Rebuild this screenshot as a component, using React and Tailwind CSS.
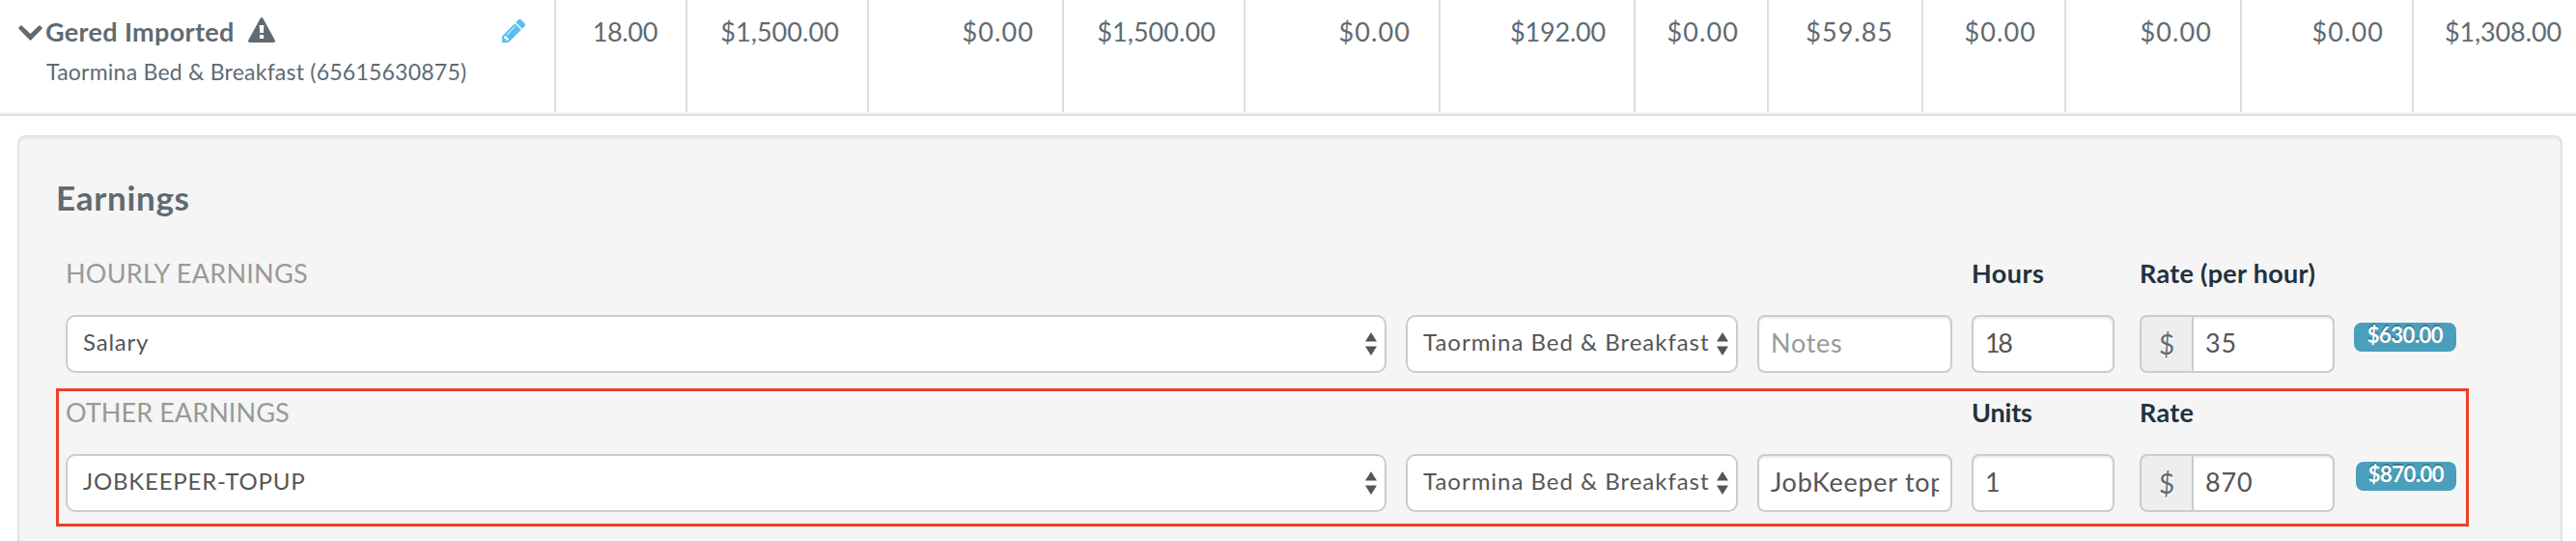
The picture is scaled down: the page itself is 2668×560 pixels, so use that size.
import { useState } from 'react';

const totals = [
  { value: '18.00', cell: 'w-[136px] tracking-[-0.34px]' },
  { value: '$1,500.00', cell: 'w-[188px] tracking-[0.07px]' },
  { value: '$0.00', cell: 'w-[202px] tracking-[1.1px]' },
  { value: '$1,500.00', cell: 'w-[188px] tracking-[0.07px]' },
  { value: '$0.00', cell: 'w-[202px] tracking-[1.1px]' },
  { value: '$192.00', cell: 'w-[202px] tracking-[-0.2px]' },
  { value: '$0.00', cell: 'w-[138px] tracking-[1.1px]' },
  { value: '$59.85', cell: 'w-[160px] tracking-[1px]' },
  { value: '$0.00', cell: 'w-[148px] tracking-[1.1px]' },
  { value: '$0.00', cell: 'w-[182px] tracking-[1.1px]' },
  { value: '$0.00', cell: 'w-[178px] tracking-[1.1px]' },
];

const columns = 'grid grid-cols-[1388px_364px_222px_174px_202px_126px]';

const ChevronDown = () => (
  <svg viewBox="0 0 25 16" className="h-4 w-[25px]" fill="currentColor">
    <path d="M3.6.4 12.5 9 21.4.4q.6-.5 1.2 0l2 2.1q.6.6 0 1.2L13.2 15.4q-.7.6-1.4 0L.4 3.7q-.6-.6 0-1.2l2-2.1q.6-.5 1.2 0z" />
  </svg>
);

const Warning = () => (
  <svg viewBox="0 0 28 26" className="h-[26px] w-7">
    <path d="M12.6 1q1.4-2 2.8 0l12.3 22.5q.8 2.5-1.5 2.5H1.8q-2.3 0-1.5-2.5z" fill="currentColor" />
    <path d="M11.6 8h4.8l-.5 8h-3.8zM11.9 18h4.2v4h-4.2z" fill="#fff" />
  </svg>
);

const Pencil = () => (
  <svg viewBox="128 149 1515 1515" className="size-6" fill="currentColor">
    <path d="M491 1536l91-91-235-235-91 91v107h128v128h107zm523-928q0-22-22-22-10 0-17 7l-542 542q-7 7-7 17 0 22 22 22 10 0 17-7l542-542q7-7 7-17zm-54-192l416 416-832 832h-416v-416zm683 96q0 53-37 90l-166 166-416-416 166-165q36-38 90-38 53 0 91 38l235 234q37 39 37 91z" />
  </svg>
);

const Select = ({ value, className }) => (
  <div className={`relative h-[60px] ${className}`}>
    <select
      defaultValue={value}
      className="h-full w-full appearance-none rounded-[10px] border-2 border-[#ccc] bg-white pb-[5px] pl-4 pr-7 text-[24px] text-[#555] outline-none"
    >
      <option>{value}</option>
    </select>
    <svg viewBox="0 0 12 24" className="pointer-events-none absolute right-[10px] top-[18px] h-6 w-3" fill="#555">
      <path d="M6 0l6 9.5H0zM6 24l6-9.5H0z" />
    </svg>
  </div>
);

const Input = ({ value, onChange, placeholder, className }) => (
  <input
    value={value}
    onChange={onChange}
    placeholder={placeholder}
    className={`h-[60px] min-w-0 border-2 border-[#ccc] bg-white px-3 pb-[3px] text-[27px] text-[#555] shadow-[inset_0_2px_2px_rgba(0,0,0,0.075)] outline-none placeholder:text-[#999] ${className}`}
  />
);

const EarningsLine = ({ line, className }) => {
  const [notes, setNotes] = useState(line.notes);
  const [units, setUnits] = useState(line.units);
  const [rate, setRate] = useState(line.rate);

  return (
    <section className={`h-[143px] w-[2499px] border-[3px] pl-[7px] ${className}`}>
      <div className={`${columns} h-[65px] pt-1 text-[27px] leading-9`}>
        <h4 className={`col-span-3 font-normal text-[#999] ${line.titleTracking}`}>{line.title}</h4>
        <span className={`font-bold text-[#22313f] ${line.unitsTracking}`}>{line.unitsLabel}</span>
        <span className="font-bold tracking-[0.3px] text-[#22313f]">{line.rateLabel}</span>
      </div>
      <div className={columns}>
        <Select value={line.category} className="w-[1368px] tracking-[0.8px]" />
        <Select value="Taormina Bed & Breakfast" className="w-[344px] tracking-[0.98px]" />
        <Input
          value={notes}
          onChange={(event) => setNotes(event.target.value)}
          placeholder="Notes"
          className="w-[202px] rounded-lg tracking-[0.7px]"
        />
        <Input
          value={units}
          onChange={(event) => setUnits(event.target.value)}
          className="w-[148px] rounded-lg tracking-[-2.5px]"
        />
        <div className="flex w-[202px]">
          <span className="h-[60px] w-[54px] rounded-l-lg border-2 border-r-0 border-[#ccc] bg-[#eee] pt-2 text-center text-[28px] leading-[40px] text-[#606a72] [text-shadow:0_2px_0_#fff]">
            $
          </span>
          <Input
            value={rate}
            onChange={(event) => setRate(event.target.value)}
            className="flex-1 rounded-r-lg tracking-[0.9px]"
          />
        </div>
        <span className={`mt-2 h-[30px] justify-self-end rounded-lg bg-[#4a9fbc] pt-px text-center text-[22px] font-bold leading-6 tracking-[-0.5px] text-white [text-shadow:0_-2px_0_rgba(0,0,0,0.25)] ${line.badge}`}>
          {line.total}
        </span>
      </div>
    </section>
  );
};

const hourly = {
  title: 'HOURLY EARNINGS',
  titleTracking: 'tracking-[0.26px]',
  category: 'Salary',
  notes: '',
  units: '18',
  unitsLabel: 'Hours',
  unitsTracking: 'tracking-[0.46px]',
  rate: '35',
  rateLabel: 'Rate (per hour)',
  total: '$630.00',
  badge: 'w-[106px]',
};

const other = {
  title: 'OTHER EARNINGS',
  titleTracking: 'tracking-[0.07px]',
  category: 'JOBKEEPER-TOPUP',
  notes: 'JobKeeper top up',
  units: '1',
  unitsLabel: 'Units',
  unitsTracking: 'tracking-[-0.18px]',
  rate: '870',
  rateLabel: 'Rate',
  total: '$870.00',
  badge: 'w-[104px]',
};

const App = () => (
  <div className="h-[560px] w-[2668px] overflow-hidden bg-white font-[Lato,sans-serif] text-[#606a72]">
    <header className="h-[120px] border-b-2 border-[#ddd]">
      <div className="flex h-[118px] border-b-2 border-[#f3f3f3]">
        <div className="w-[576px] border-r-2 border-[#ddd] pl-[19px] pt-[13px]">
          <div className="flex h-10">
            <div className="mt-[13px] w-7">
              <ChevronDown />
            </div>
            <h2 className="text-[27px] font-bold leading-10 tracking-[0.34px]">Gered Imported</h2>
            <div className="ml-[14px] mt-[5px]">
              <Warning />
            </div>
            <button className="ml-auto mr-[30px] mt-[7px] h-6 text-[#5bbdec]">
              <Pencil />
            </button>
          </div>
          <p className="ml-[29px] mt-1 text-[23px] leading-[34px] tracking-[0.23px]">
            Taormina Bed &amp; Breakfast (65615630875)
          </p>
        </div>
        {totals.map((total, index) => (
          <div key={index} className={`border-r-2 border-[#ddd] pr-[29px] pt-[13px] text-right text-[27px] leading-10 ${total.cell}`}>
            {total.value}
          </div>
        ))}
        <div className="flex-1 pr-[15px] pt-[13px] text-right text-[27px] leading-10 tracking-[-0.12px]">$1,308.00</div>
      </div>
    </header>

    <main className="ml-[18px] mt-5 h-[440px] w-[2636px] rounded-t-lg border-2 border-[#e3e3e3] bg-[#f5f5f5] px-[38px] pt-[42px] shadow-[inset_0_2px_2px_rgba(0,0,0,0.05)]">
      <h3 className="mb-[34px] text-[35px] font-bold leading-10 tracking-[0.7px]">Earnings</h3>
      <EarningsLine line={hourly} className="border-transparent" />
      <EarningsLine line={other} className="mt-px border-[#ef3f28]" />
    </main>
  </div>
);

export default App;
